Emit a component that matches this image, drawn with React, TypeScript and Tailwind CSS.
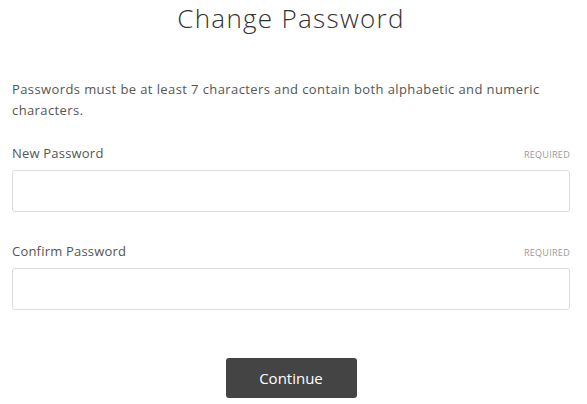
import { useState } from "react"

const Field = ({ label, id }: { label: string; id: string }) => {
  const [value, setValue] = useState("")
  return (
    <div>
      <div className="flex items-end justify-between">
        <label htmlFor={id} className="text-[13px] leading-[16px] tracking-[0.2px] text-[#555]">
          {label}
        </label>
        <span className="text-[9px] leading-[12px] tracking-[0.3px] text-[#999]">REQUIRED</span>
      </div>
      <input
        id={id}
        type="password"
        value={value}
        onChange={(e) => setValue(e.target.value)}
        className="mt-[9px] block h-[42px] w-full rounded-[3px] border border-[#dcdcdc] bg-white px-3 text-[14px] outline-none"
      />
    </div>
  )
}

export default function App() {
  return (
    <div className="min-h-[404px] bg-white pl-3 pr-[17px] font-['Open_Sans',sans-serif] text-[#555]">
      <h1 className="pt-[1px] text-center text-[26px] font-light leading-[34px] tracking-[1.3px] text-[#333]">
        Change Password
      </h1>
      <p className="mt-[44px] text-[13px] leading-[21px] tracking-[0.4px]">
        Passwords must be at least 7 characters and contain both alphabetic and numeric characters.
      </p>
      <form className="mt-[24px] flex flex-col gap-[31px]" onSubmit={(e) => e.preventDefault()}>
        <Field label="New Password" id="newPassword" />
        <Field label="Confirm Password" id="confirmPassword" />
        <div className="mt-[17px] flex justify-center">
          <button
            type="submit"
            className="h-[40px] w-[131px] rounded-[3px] bg-[#444] text-[15px] text-white"
          >
            Continue
          </button>
        </div>
      </form>
    </div>
  )
}
